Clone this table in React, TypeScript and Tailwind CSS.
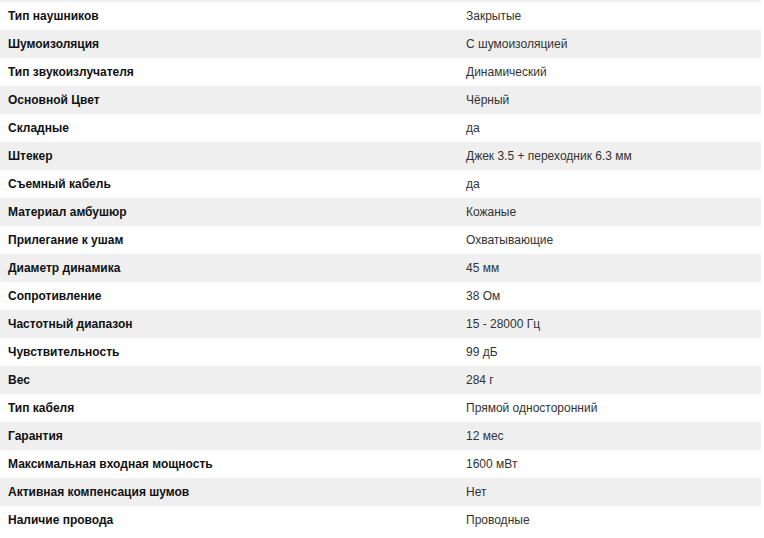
const specs: [string, string][] = [
  ["Тип наушников", "Закрытые"],
  ["Шумоизоляция", "С шумоизоляцией"],
  ["Тип звукоизлучателя", "Динамический"],
  ["Основной Цвет", "Чёрный"],
  ["Складные", "да"],
  ["Штекер", "Джек 3.5 + переходник 6.3 мм"],
  ["Съемный кабель", "да"],
  ["Материал амбушюр", "Кожаные"],
  ["Прилегание к ушам", "Охватывающие"],
  ["Диаметр динамика", "45 мм"],
  ["Сопротивление", "38 Ом"],
  ["Частотный диапазон", "15 - 28000 Гц"],
  ["Чувствительность", "99 дБ"],
  ["Вес", "284 г"],
  ["Тип кабеля", "Прямой односторонний"],
  ["Гарантия", "12 мес"],
  ["Максимальная входная мощность", "1600 мВт"],
  ["Активная компенсация шумов", "Нет"],
  ["Наличие провода", "Проводные"],
];

export default function App() {
  return (
    <div className="w-[764px] h-[538px] overflow-hidden bg-white font-['Liberation_Sans',Arial,sans-serif] text-[12px]">
      <div className="w-[761px]">
        <div className="h-[2px] bg-[#efefef]" />
        {specs.map(([label, value], i) => (
          <div key={label} className={`flex h-[28px] items-center ${i % 2 === 1 ? "bg-[#efefef]" : "bg-white"}`}>
            <div className="w-[458px] pl-2 font-bold text-[#111]">{label}</div>
            <div className="flex-1 pl-2 text-[#333]">{value}</div>
          </div>
        ))}
      </div>
    </div>
  );
}
